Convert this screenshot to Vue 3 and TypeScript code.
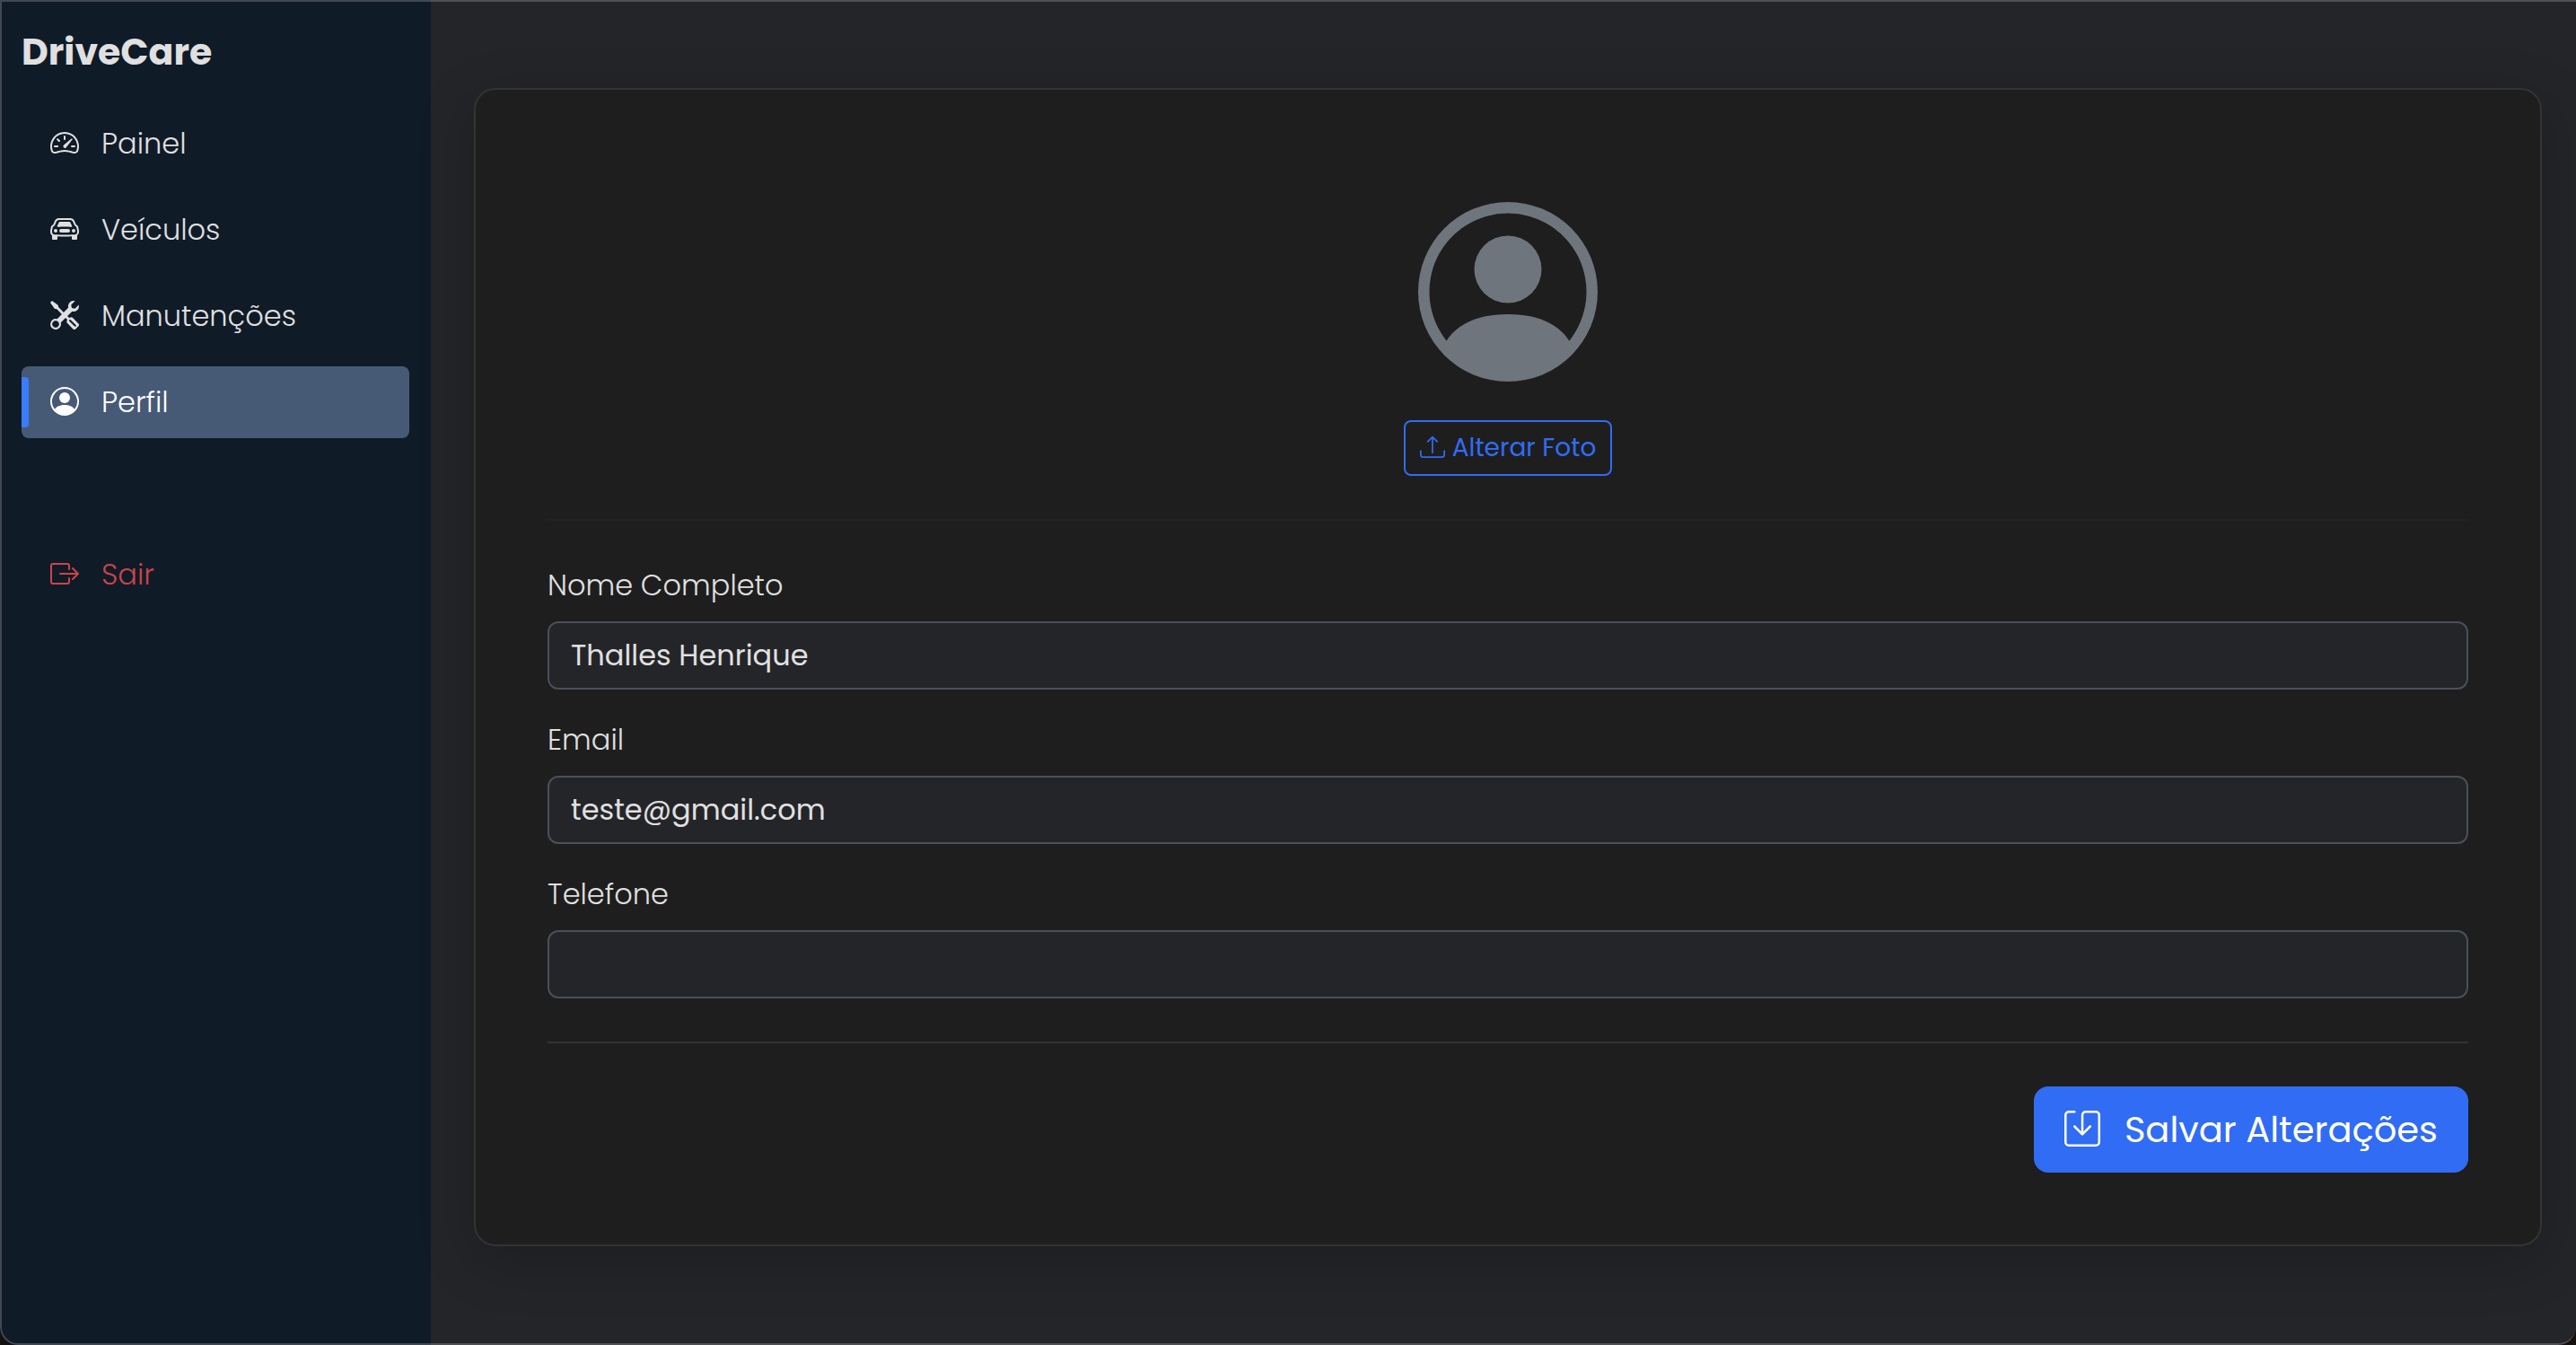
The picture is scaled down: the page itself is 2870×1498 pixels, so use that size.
<script setup lang="ts">
import { ref } from 'vue'

interface NavItem {
  label: string
  icon: string[]
  active?: boolean
}

const icons = {
  speedometer: [
    'M8 4a.5.5 0 0 1 .5.5V6a.5.5 0 0 1-1 0V4.5A.5.5 0 0 1 8 4M3.732 5.732a.5.5 0 0 1 .707 0l.915.914a.5.5 0 1 1-.708.708l-.914-.915a.5.5 0 0 1 0-.707M2 10a.5.5 0 0 1 .5-.5h1.586a.5.5 0 0 1 0 1H2.5A.5.5 0 0 1 2 10m9.5 0a.5.5 0 0 1 .5-.5h1.5a.5.5 0 0 1 0 1H12a.5.5 0 0 1-.5-.5m.754-4.246a.39.39 0 0 0-.527-.02L7.547 9.31a.91.91 0 1 0 1.302 1.258l3.434-4.297a.39.39 0 0 0-.029-.518z',
    'M0 10a8 8 0 1 1 15.547 2.661c-.442 1.253-1.845 1.602-2.932 1.25C11.309 13.488 9.475 13 8 13c-1.474 0-3.31.488-4.615.911-1.087.352-2.49.003-2.932-1.25A8 8 0 0 1 0 10m8-7a7 7 0 0 0-6.603 9.329c.203.575.923.876 1.68.63C4.397 12.533 6.358 12 8 12s3.604.532 4.923.96c.757.245 1.477-.056 1.68-.631A7 7 0 0 0 8 3',
  ],
  car: [
    'M4 9a1 1 0 1 1-2 0 1 1 0 0 1 2 0m10 0a1 1 0 1 1-2 0 1 1 0 0 1 2 0M6 8a1 1 0 0 0 0 2h4a1 1 0 1 0 0-2zM4.862 4.276 3.906 6.19a.51.51 0 0 0 .497.731c.91-.073 2.35-.17 3.597-.17s2.688.097 3.597.17a.51.51 0 0 0 .497-.731l-.956-1.913A.5.5 0 0 0 10.691 4H5.309a.5.5 0 0 0-.447.276',
    'M2.52 3.515A2.5 2.5 0 0 1 4.82 2h6.362c1 0 1.904.596 2.298 1.515l.792 1.848c.075.175.21.319.38.404.5.25.855.715.965 1.262l.335 1.679q.05.242.049.49v.413c0 .814-.39 1.543-1 1.997V13.5a.5.5 0 0 1-.5.5h-2a.5.5 0 0 1-.5-.5v-1.338c-1.292.048-2.745.088-4 .088s-2.708-.04-4-.088V13.5a.5.5 0 0 1-.5.5h-2a.5.5 0 0 1-.5-.5v-1.892c-.61-.454-1-1.183-1-1.997v-.413a2.5 2.5 0 0 1 .049-.49l.335-1.68c.11-.546.465-1.012.964-1.261a.8.8 0 0 0 .381-.404l.792-1.848ZM4.82 3a1.5 1.5 0 0 0-1.379.91l-.792 1.847a1.8 1.8 0 0 1-.853.904.8.8 0 0 0-.43.564L1.03 8.904a1.5 1.5 0 0 0-.03.294v.413c0 .796.62 1.448 1.408 1.484 1.555.07 3.786.155 5.592.155s4.037-.084 5.592-.155A1.48 1.48 0 0 0 15 9.611v-.413q0-.148-.03-.294l-.335-1.68a.8.8 0 0 0-.43-.563 1.8 1.8 0 0 1-.853-.904l-.792-1.848A1.5 1.5 0 0 0 11.18 3z',
  ],
  tools: [
    'M1 0 0 1l2.2 3.081a1 1 0 0 0 .815.419h.07a1 1 0 0 1 .708.293l2.675 2.675-2.617 2.654A3.003 3.003 0 0 0 0 13a3 3 0 1 0 5.878-.851l2.654-2.617.968.968-.305.914a1 1 0 0 0 .242 1.023l3.27 3.27a.997.997 0 0 0 1.414 0l1.586-1.586a.997.997 0 0 0 0-1.414l-3.27-3.27a1 1 0 0 0-1.023-.242L10.5 9.5l-.96-.96 2.68-2.643A3.005 3.005 0 0 0 16 3q0-.405-.102-.777l-2.14 2.141L12 4l-.364-1.757L13.777.102a3 3 0 0 0-3.675 3.68L7.462 6.46 4.793 3.793a1 1 0 0 1-.293-.707v-.071a1 1 0 0 0-.419-.814zm9.646 10.646a.5.5 0 0 1 .708 0l2.914 2.915a.5.5 0 0 1-.707.707l-2.915-2.914a.5.5 0 0 1 0-.708M3 11l.471.242.529.026.287.445.445.287.026.529L5 13l-.242.471-.026.529-.445.287-.287.445-.529.026L3 15l-.471-.242L2 14.732l-.287-.445L1.268 14l-.026-.529L1 13l.242-.471.026-.529.445-.287.287-.445.529-.026z',
  ],
  person: [
    'M11 6a3 3 0 1 1-6 0 3 3 0 0 1 6 0',
    'M0 8a8 8 0 1 1 16 0A8 8 0 0 1 0 8m8-7a7 7 0 0 0-5.468 11.37C3.242 11.226 4.805 10 8 10s4.757 1.225 5.468 2.37A7 7 0 0 0 8 1',
  ],
  logout: [
    'M10 12.5a.5.5 0 0 1-.5.5h-8a.5.5 0 0 1-.5-.5v-9a.5.5 0 0 1 .5-.5h8a.5.5 0 0 1 .5.5v2a.5.5 0 0 0 1 0v-2A1.5 1.5 0 0 0 9.5 2h-8A1.5 1.5 0 0 0 0 3.5v9A1.5 1.5 0 0 0 1.5 14h8a1.5 1.5 0 0 0 1.5-1.5v-2a.5.5 0 0 0-1 0z',
    'M15.854 8.354a.5.5 0 0 0 0-.708l-3-3a.5.5 0 0 0-.708.708L14.293 7.5H5.5a.5.5 0 0 0 0 1h8.793l-2.147 2.146a.5.5 0 0 0 .708.708z',
  ],
  upload: [
    'M.5 9.9a.5.5 0 0 1 .5.5v2.5a1 1 0 0 0 1 1h12a1 1 0 0 0 1-1v-2.5a.5.5 0 0 1 1 0v2.5a2 2 0 0 1-2 2H2a2 2 0 0 1-2-2v-2.5a.5.5 0 0 1 .5-.5',
    'M7.646 1.146a.5.5 0 0 1 .708 0l3 3a.5.5 0 0 1-.708.708L8.5 2.707V11.5a.5.5 0 0 1-1 0V2.707L5.354 4.854a.5.5 0 1 1-.708-.708z',
  ],
  save: [
    'M2 1a1 1 0 0 0-1 1v12a1 1 0 0 0 1 1h12a1 1 0 0 0 1-1V2a1 1 0 0 0-1-1H9.5a1 1 0 0 0-1 1v7.293l2.646-2.647a.5.5 0 0 1 .708.708l-3.5 3.5a.5.5 0 0 1-.708 0l-3.5-3.5a.5.5 0 1 1 .708-.708L7.5 9.293V2a2 2 0 0 1 2-2H14a2 2 0 0 1 2 2v12a2 2 0 0 1-2 2H2a2 2 0 0 1-2-2V2a2 2 0 0 1 2-2h2.5a.5.5 0 0 1 0 1z',
  ],
}

const navItems: NavItem[] = [
  { label: 'Painel', icon: icons.speedometer },
  { label: 'Veículos', icon: icons.car },
  { label: 'Manutenções', icon: icons.tools },
  { label: 'Perfil', icon: icons.person, active: true },
]

const nome = ref('Thalles Henrique')
const email = ref('teste@gmail.com')
const telefone = ref('')
</script>

<template>
  <div class="window">
    <div class="app">
      <aside class="sidebar">
        <h1 class="brand">DriveCare</h1>
        <nav class="nav">
          <a
            v-for="item in navItems"
            :key="item.label"
            href="#"
            class="nav-link"
            :class="{ active: item.active }"
          >
            <svg class="icon" viewBox="0 0 16 16" aria-hidden="true">
              <path v-for="d in item.icon" :key="d" :d="d" fill-rule="evenodd" />
            </svg>
            <span>{{ item.label }}</span>
          </a>
          <a href="#" class="nav-link logout">
            <svg class="icon" viewBox="0 0 16 16" aria-hidden="true">
              <path v-for="d in icons.logout" :key="d" :d="d" fill-rule="evenodd" />
            </svg>
            <span>Sair</span>
          </a>
        </nav>
      </aside>

      <main class="main">
        <form class="card" @submit.prevent>
          <div class="photo">
            <svg class="avatar" viewBox="0 0 16 16" role="img" aria-label="Foto de perfil">
              <path v-for="d in icons.person" :key="d" :d="d" fill-rule="evenodd" />
            </svg>
            <button type="button" class="btn-outline">
              <svg class="icon" viewBox="0 0 16 16" aria-hidden="true">
                <path v-for="d in icons.upload" :key="d" :d="d" />
              </svg>
              <span>Alterar Foto</span>
            </button>
          </div>
          <hr class="rule faint" />
          <div class="fields">
            <div class="field">
              <label for="nome">Nome Completo</label>
              <input id="nome" v-model="nome" type="text" />
            </div>
            <div class="field">
              <label for="email">Email</label>
              <input id="email" v-model="email" type="email" />
            </div>
            <div class="field">
              <label for="telefone">Telefone</label>
              <input id="telefone" v-model="telefone" type="tel" />
            </div>
          </div>
          <hr class="rule" />
          <div class="actions">
            <button type="submit" class="btn-primary">
              <svg class="icon" viewBox="0 0 16 16" aria-hidden="true">
                <path v-for="d in icons.save" :key="d" :d="d" />
              </svg>
              <span>Salvar Alterações</span>
            </button>
          </div>
        </form>
      </main>
    </div>
  </div>
</template>

<style>
body {
  margin: 0;
  background: #14110f;
}
</style>

<style scoped>
.window {
  position: relative;
  overflow: hidden;
  border-radius: 0 0 20px 20px;
  font-family: Poppins, Inter, 'Open Sans', sans-serif;
  font-size: 32px;
  line-height: 48px;
  font-weight: 300;
  color: #e0e0e0;
}

.window::after {
  content: '';
  position: absolute;
  inset: 0;
  border: 2px solid rgba(255, 255, 255, 0.2);
  border-right: 0;
  border-radius: 0 0 20px 20px;
  pointer-events: none;
}

.app {
  display: flex;
  min-height: 100vh;
  background: #242529;
}

.icon {
  width: 32px;
  height: 32px;
  margin-bottom: 2px;
  flex: none;
  fill: currentColor;
}

.sidebar {
  box-sizing: border-box;
  width: 480px;
  flex: none;
  padding: 24px;
  background: #101b28;
}

.brand {
  margin: 10px 0 38px;
  font-size: 41px;
  line-height: 48px;
  font-weight: 700;
}

.nav {
  display: flex;
  flex-direction: column;
  gap: 16px;
}

.nav-link {
  position: relative;
  display: flex;
  align-items: center;
  gap: 25px;
  padding: 16px 32px;
  border-radius: 8px;
  color: inherit;
  text-decoration: none;
}

.nav-link.active {
  background: #475a75;
  color: #fff;
}

.nav-link.active::before {
  content: '';
  position: absolute;
  left: 0;
  top: 12px;
  bottom: 12px;
  width: 8px;
  border-radius: 0 4px 4px 0;
  background: #3a7cfb;
}

.nav-link.logout {
  margin-top: 96px;
  color: #cb444a;
}

.main {
  flex: 1;
  min-width: 0;
  padding: 98px 38px 98px 48px;
}

.card {
  display: flex;
  flex-direction: column;
  gap: 48px;
  padding: 80px;
  border: 2px solid #333;
  border-radius: 24px;
  background: #1e1e1e;
  box-shadow: 0 16px 64px rgba(0, 0, 0, 0.2);
}

.photo {
  display: flex;
  flex-direction: column;
  align-items: center;
  gap: 43px;
  padding-top: 45px;
}

.avatar {
  width: 200px;
  height: 200px;
  fill: #6f757c;
}

button {
  display: flex;
  align-items: center;
  font: inherit;
  font-weight: 400;
  cursor: pointer;
}

.btn-outline {
  gap: 8px;
  padding: 8px 16px;
  border: 2px solid #316cf4;
  border-radius: 8px;
  background: transparent;
  color: #316cf4;
  font-size: 28px;
  line-height: 42px;
}

.btn-outline .icon {
  width: 28px;
  height: 28px;
}

.rule {
  width: 100%;
  height: 2px;
  margin: 0;
  border: 0;
  background: #333;
}

.rule.faint {
  background: #232323;
}

.fields {
  display: flex;
  flex-direction: column;
  gap: 32px;
}

.field {
  display: flex;
  flex-direction: column;
  gap: 16px;
}

.field input {
  box-sizing: border-box;
  width: 100%;
  height: 76px;
  padding: 0 24px;
  border: 2px solid #495057;
  border-radius: 12px;
  background: #242529;
  color: #e0e0e0;
  font: inherit;
  font-weight: 400;
}

.actions {
  display: flex;
  justify-content: flex-end;
}

.btn-primary {
  gap: 27px;
  padding: 18px 34px;
  border: 0;
  border-radius: 16px;
  background: #316cf4;
  color: #fff;
  font-size: 40px;
  line-height: 60px;
}

.btn-primary .icon {
  width: 40px;
  height: 40px;
}
</style>
